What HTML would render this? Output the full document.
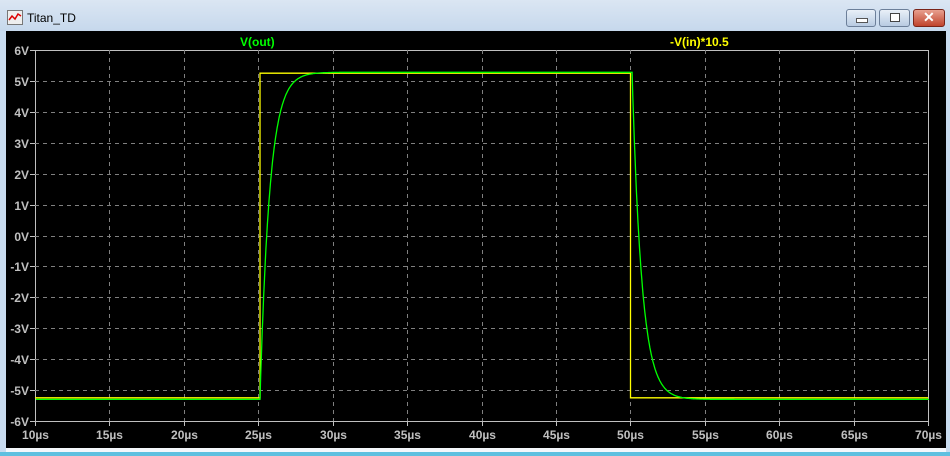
<!DOCTYPE html>
<html><head><meta charset="utf-8"><style>
html,body{margin:0;padding:0;width:950px;height:456px;overflow:hidden;background:#c9dcf0;font-family:"Liberation Sans",sans-serif}
#title{position:absolute;left:0;top:0;width:950px;height:31px;background:linear-gradient(#dbe6f3,#c6d8ec)}
#tt{position:absolute;left:27px;top:11px;font-size:12px;color:#000}
.btn{position:absolute;top:9px;height:16px;border:1px solid #6c7f99;border-radius:3px;background:linear-gradient(#e9f0f8,#b8cbe2)}
#plot{position:absolute;left:6px;top:31px;width:940px;height:417px;background:#000}
#bot{position:absolute;left:0;top:452px;width:950px;height:4px;background:#5fc0e0}
#wl{position:absolute;left:6px;top:448px;width:940px;height:4px;background:#f4f7fb}
</style></head><body>
<div id="title">
<svg style="position:absolute;left:7px;top:10px" width="16" height="15"><rect x="0.5" y="0.5" width="15" height="14" fill="#eee" stroke="#777"/><polyline points="2,10 5,6 8,9 11,4 14,6" fill="none" stroke="#d00" stroke-width="1.5"/></svg>
<div id="tt">Titan_TD</div>
<div class="btn" style="left:846px;width:28px"><div style="position:absolute;left:9px;top:8px;width:10px;height:3px;background:#fff;border:1px solid #555"></div></div>
<div class="btn" style="left:879px;width:29px"><div style="position:absolute;left:10px;top:3px;width:8px;height:7px;border:1px solid #444;background:#fff"></div></div>
<div class="btn" style="left:913px;width:30px;background:linear-gradient(#e8a08f,#c0432c);border-color:#7a2418"><div style="position:absolute;left:9px;top:-1px;color:#fff;font-weight:bold;font-size:14px">✕</div></div>
</div>
<div id="plot"></div>
<div id="wl"></div>
<svg id="s" style="position:absolute;left:0;top:0" width="950" height="456"></svg>
<div id="bot"></div>
<script>
var s=document.getElementById('s'),h='';
var L=35,R=928,T=50,B=421;
function X(t){return 35+(t-10)*(R-L)/60+1}
function Y(v){return T+(6-v)*(B-T)/12}
h+='<rect x="'+L+'.5" y="'+T+'.5" width="'+(R-L)+'" height="'+(B-T)+'" fill="none" stroke="#c0c0c0"/>';
for(var k=1;k<12;k++){var y=Math.round(Y(6-k))+.5;h+='<line x1="'+L+'" x2="'+R+'" y1="'+y+'" y2="'+y+'" stroke="#808080" stroke-dasharray="4,4"/>';}
for(var k=1;k<12;k++){var x=Math.round(L+k*(R-L)/12)+.5;h+='<line y1="'+T+'" y2="'+B+'" x1="'+x+'" x2="'+x+'" stroke="#808080" stroke-dasharray="4,4"/>';}
for(var k=0;k<=12;k++){var v=6-k,y=Math.round(Y(v))+.5;h+='<line x1="'+(L-5)+'" x2="'+L+'" y1="'+y+'" y2="'+y+'" stroke="#c0c0c0"/>';h+='<text x="'+(L-6)+'" y="'+(y+4.5)+'" text-anchor="end" fill="#c0c0c0" font-size="12" font-weight="bold">'+v+'V</text>';}
for(var k=0;k<=12;k++){var t=10+5*k,x=Math.round(L+k*(R-L)/12)+.5;h+='<line y1="'+B+'" y2="'+(B+5)+'" x1="'+x+'" x2="'+x+'" stroke="#c0c0c0"/>';h+='<text x="'+x+'" y="'+(B+18)+'" text-anchor="middle" fill="#c0c0c0" font-size="12" font-weight="bold">'+t+'µs</text>';}
var yh=Y(5.25),yl=Y(-5.25);
h+='<polyline fill="none" stroke="#ffff00" stroke-width="1.3" points="'+L+','+yl+' 260,'+yl+' 260,'+yh+' 630.5,'+yh+' 630.5,'+yl+' '+R+','+yl+'"/>';
var p=[],gh=5.28,gl=-5.3;
for(var t=10;t<=70;t+=0.05){var v;
if(t<25.05)v=gl;else if(t<50.05)v=gh-(gh-gl)*Math.exp(-(t-25.05)/0.65);else v=gl+(gh-gl)*Math.exp(-(t-50.05)/0.65);
p.push(X(t).toFixed(1)+','+Y(v).toFixed(1));}
h+='<polyline fill="none" stroke="#00ff00" stroke-width="1.3" points="'+p.join(' ')+'"/>';
h+='<text x="240" y="46" fill="#00ff00" font-size="12" font-weight="bold">V(out)</text>';
h+='<text x="670" y="46" fill="#ffff00" font-size="12" font-weight="bold">-V(in)*10.5</text>';
s.innerHTML=h;
</script>
</body></html>
